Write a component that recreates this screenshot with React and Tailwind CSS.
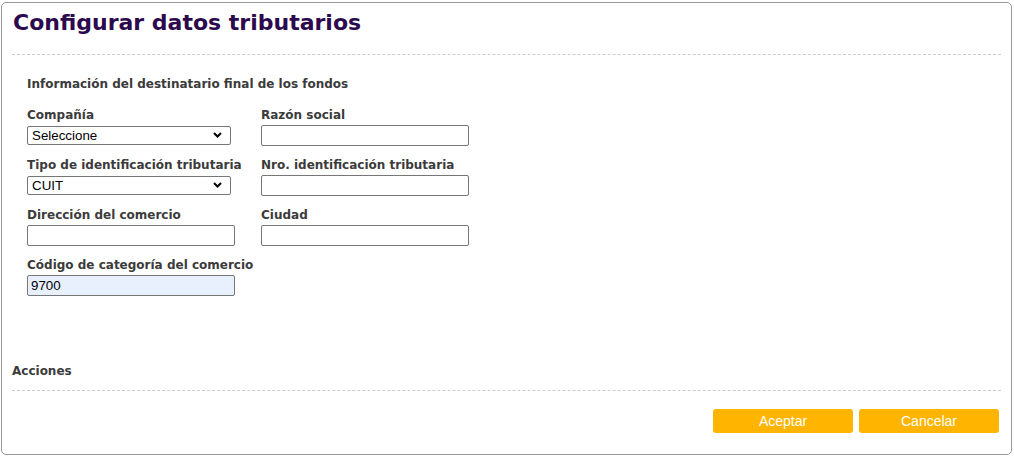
import { useState } from "react";

const labelCls = "block whitespace-nowrap text-[12px] font-bold leading-[15px] text-[#3b3b3b] [font-family:'DejaVu_Sans',Verdana,sans-serif]";
const inputCls = "block h-[21px] w-[208px] rounded-[2px] border border-[#767676] px-[3px] text-[13.33px] text-black [font-family:'Liberation_Sans',Arial,sans-serif] outline-none";

const Chevron = () => (
    <svg className="pointer-events-none absolute right-[9px] top-[6px]" width="9" height="6" viewBox="0 0 9 6">
        <path d="M1 1l3.5 3.5L8 1" fill="none" stroke="#000" strokeWidth="2" />
    </svg>
);

const SelectField = ({ label, value, options }) => {
    const [val, setVal] = useState(value);
    return (
        <div>
            <label className={labelCls}>{label}</label>
            <div className="relative mt-[3px] w-[204px]">
                <select
                    value={val}
                    onChange={(e) => setVal(e.target.value)}
                    className="block h-[19px] w-[204px] appearance-none rounded-[2px] border border-[#767676] bg-white pl-[4px] text-[13.33px] leading-[17px] text-black [font-family:'Liberation_Sans',Arial,sans-serif] outline-none"
                >
                    {options.map((o) => (
                        <option key={o}>{o}</option>
                    ))}
                </select>
                <Chevron />
            </div>
        </div>
    );
};

const TextField = ({ label, value = "", filled = false }) => (
    <div>
        <label className={labelCls}>{label}</label>
        <input
            type="text"
            defaultValue={value}
            className={`${inputCls} mt-[2px] ${filled ? "bg-[#e8f0fe]" : "bg-white"}`}
        />
    </div>
);

const App = () => (
    <div className="bg-white pl-[1px] pt-[2px]">
        <div className="flex h-[453px] w-[1011px] flex-col rounded-[5px] border border-[#999] bg-white">
            <h1 className="pl-[11px] pt-[6px] text-[22px] font-bold leading-[28px] text-[#2c0a4d] [font-family:'DejaVu_Sans',Verdana,sans-serif]">
                Configurar datos tributarios
            </h1>
            <div className="mx-[10px] mt-[17px] border-t border-dashed border-[#ccc]" />

            <div className="pl-[25px] pt-[22px]">
                <h2 className={labelCls}>Información del destinatario final de los fondos</h2>
                <div className="mt-[16px] grid grid-cols-[234px_208px] gap-y-[12px]">
                    <SelectField label="Compañía" value="Seleccione" options={["Seleccione"]} />
                    <TextField label="Razón social" />
                    <SelectField label="Tipo de identificación tributaria" value="CUIT" options={["CUIT", "CUIL", "CDI"]} />
                    <TextField label="Nro. identificación tributaria" />
                    <TextField label="Dirección del comercio" />
                    <TextField label="Ciudad" />
                    <TextField label="Código de categoría del comercio" value="9700" filled />
                </div>
            </div>

            <div className="mt-auto">
                <h3 className={`${labelCls} pl-[10px]`}>Acciones</h3>
                <div className="mx-[10px] mt-[11px] border-t border-dashed border-[#ccc]" />
                <div className="flex justify-end gap-[6px] pb-[21px] pr-[12px] pt-[18px]">
                    <button className="h-[24px] w-[140px] rounded-[3px] bg-[#ffb400] text-[14px] text-white [font-family:'Liberation_Sans',Arial,sans-serif]">
                        Aceptar
                    </button>
                    <button className="h-[24px] w-[140px] rounded-[3px] bg-[#ffb400] text-[14px] text-white [font-family:'Liberation_Sans',Arial,sans-serif]">
                        Cancelar
                    </button>
                </div>
            </div>
        </div>
    </div>
);

export default App;
